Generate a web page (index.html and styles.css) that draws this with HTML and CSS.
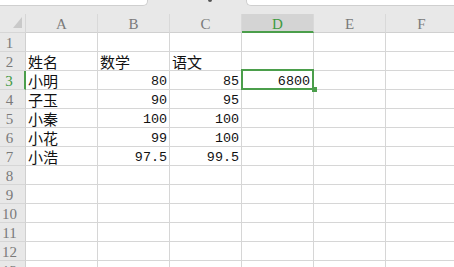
FILE: index.html
```html
<!DOCTYPE html>
<html lang="zh">
<head>
<meta charset="utf-8">
<link rel="stylesheet" href="styles.css">
</head>
<body>
<div class="top">
  <div class="namebox"></div>
  <span class="fxmark"></span>
  <div class="formula"></div>
</div>
<div class="sheet">
  <div class="corner"><svg width="9" height="11" viewBox="0 0 9 11"><polygon points="9,0 9,11 0,11" fill="#c9c9c9"/></svg></div>
  <div class="ch">A</div><div class="ch">B</div><div class="ch">C</div><div class="ch sel">D</div><div class="ch">E</div><div class="ch">F</div>

  <div class="rh">1</div><div class="c"></div><div class="c"></div><div class="c"></div><div class="c"></div><div class="c"></div><div class="c"></div>

  <div class="rh">2</div><div class="c t">姓名</div><div class="c t">数学</div><div class="c t">语文</div><div class="c"></div><div class="c"></div><div class="c"></div>

  <div class="rh sel">3</div><div class="c t">小明</div><div class="c n">80</div><div class="c n">85</div><div class="c n active">6800</div><div class="c"></div><div class="c"></div>

  <div class="rh">4</div><div class="c t">子玉</div><div class="c n">90</div><div class="c n">95</div><div class="c"></div><div class="c"></div><div class="c"></div>

  <div class="rh">5</div><div class="c t">小秦</div><div class="c n">100</div><div class="c n">100</div><div class="c"></div><div class="c"></div><div class="c"></div>

  <div class="rh">6</div><div class="c t">小花</div><div class="c n">99</div><div class="c n">100</div><div class="c"></div><div class="c"></div><div class="c"></div>

  <div class="rh">7</div><div class="c t">小浩</div><div class="c n">97.5</div><div class="c n">99.5</div><div class="c"></div><div class="c"></div><div class="c"></div>

  <div class="rh">8</div><div class="c"></div><div class="c"></div><div class="c"></div><div class="c"></div><div class="c"></div><div class="c"></div>
  <div class="rh">9</div><div class="c"></div><div class="c"></div><div class="c"></div><div class="c"></div><div class="c"></div><div class="c"></div>
  <div class="rh">10</div><div class="c"></div><div class="c"></div><div class="c"></div><div class="c"></div><div class="c"></div><div class="c"></div>
  <div class="rh">11</div><div class="c"></div><div class="c"></div><div class="c"></div><div class="c"></div><div class="c"></div><div class="c"></div>
  <div class="rh">12</div><div class="c"></div><div class="c"></div><div class="c"></div><div class="c"></div><div class="c"></div><div class="c"></div>
  <div class="rh">13</div><div class="c"></div><div class="c"></div><div class="c"></div><div class="c"></div><div class="c"></div><div class="c"></div>
</div>
</body>
</html>
```
FILE: styles.css
```css
html, body {
  margin: 0;
  padding: 0;
  background: #ffffff;
  overflow: hidden;
  width: 454px;
  height: 267px;
}

.top {
  height: 14px;
  background: #e8e8e8;
  display: flex;
  align-items: flex-start;
}

.namebox {
  width: 147px;
  height: 5px;
  background: #ffffff;
  border-right: 1px solid #cfcfcf;
  border-bottom: 1px solid #cfcfcf;
  border-radius: 0 0 5px 0;
}

.fxmark {
  width: 4px;
  height: 2px;
  margin-left: 60px;
  background: #555555;
  border-radius: 0 0 2px 2px;
}

.formula {
  margin-left: 34px;
  flex: 1;
  height: 5px;
  background: #ffffff;
  border-left: 1px solid #cfcfcf;
  border-bottom: 1px solid #cfcfcf;
  border-radius: 0 0 0 5px;
}

.sheet {
  display: grid;
  grid-template-columns: 26px repeat(6, 72px);
  grid-auto-rows: 19px;
  height: 253px;
  overflow: hidden;
}

.sheet > div {
  box-sizing: border-box;
  border-right: 1px solid #d6d6d6;
  border-bottom: 1px solid #d6d6d6;
}

.corner {
  background: #e8e8e8;
  display: flex;
  align-items: flex-end;
  justify-content: flex-end;
  padding: 0 3px 4px 0;
}

.corner svg {
  display: block;
}

.ch {
  background: #e8e8e8;
  border-right-color: #d9d9d9 !important;
  border-bottom-color: #d0d0d0 !important;
  font-family: "Liberation Serif", serif;
  font-size: 15px;
  color: #7a7a7a;
  text-align: center;
  line-height: 20px;
}

.ch.sel {
  background: #d4d4d4;
  color: #3f9a3f;
  border-bottom: 2px solid #4b9e4b !important;
}

.rh {
  background: #e8e8e8;
  border-right-color: #d0d0d0 !important;
  font-family: "Liberation Serif", serif;
  font-size: 15px;
  color: #7a7a7a;
  text-align: center;
  padding-right: 6px;
  line-height: 20px;
}

.rh.sel {
  color: #3f9a3f;
  border-right: 2px solid #4b9e4b !important;
}

.c {
  background: #ffffff;
  white-space: nowrap;
}

.c.t {
  font-family: "Noto Sans CJK SC", sans-serif;
  font-size: 15px;
  color: #111111;
  line-height: 18px;
  padding-left: 2px;
  padding-top: 1px;
}

.c.n {
  font-family: "Liberation Mono", monospace;
  font-size: 13.4px;
  color: #111111;
  text-align: right;
  padding-right: 2px;
  line-height: 22px;
}

.c.active {
  position: relative;
  padding-right: 3px;
}

.c.active::after {
  content: "";
  position: absolute;
  left: -1px;
  top: -2px;
  right: -1px;
  bottom: -1px;
  border: 2px solid #4b9e4b;
}

.c.active::before {
  content: "";
  position: absolute;
  width: 5px;
  height: 5px;
  right: -4px;
  bottom: -3px;
  background: #4b9e4b;
  z-index: 1;
}
```
